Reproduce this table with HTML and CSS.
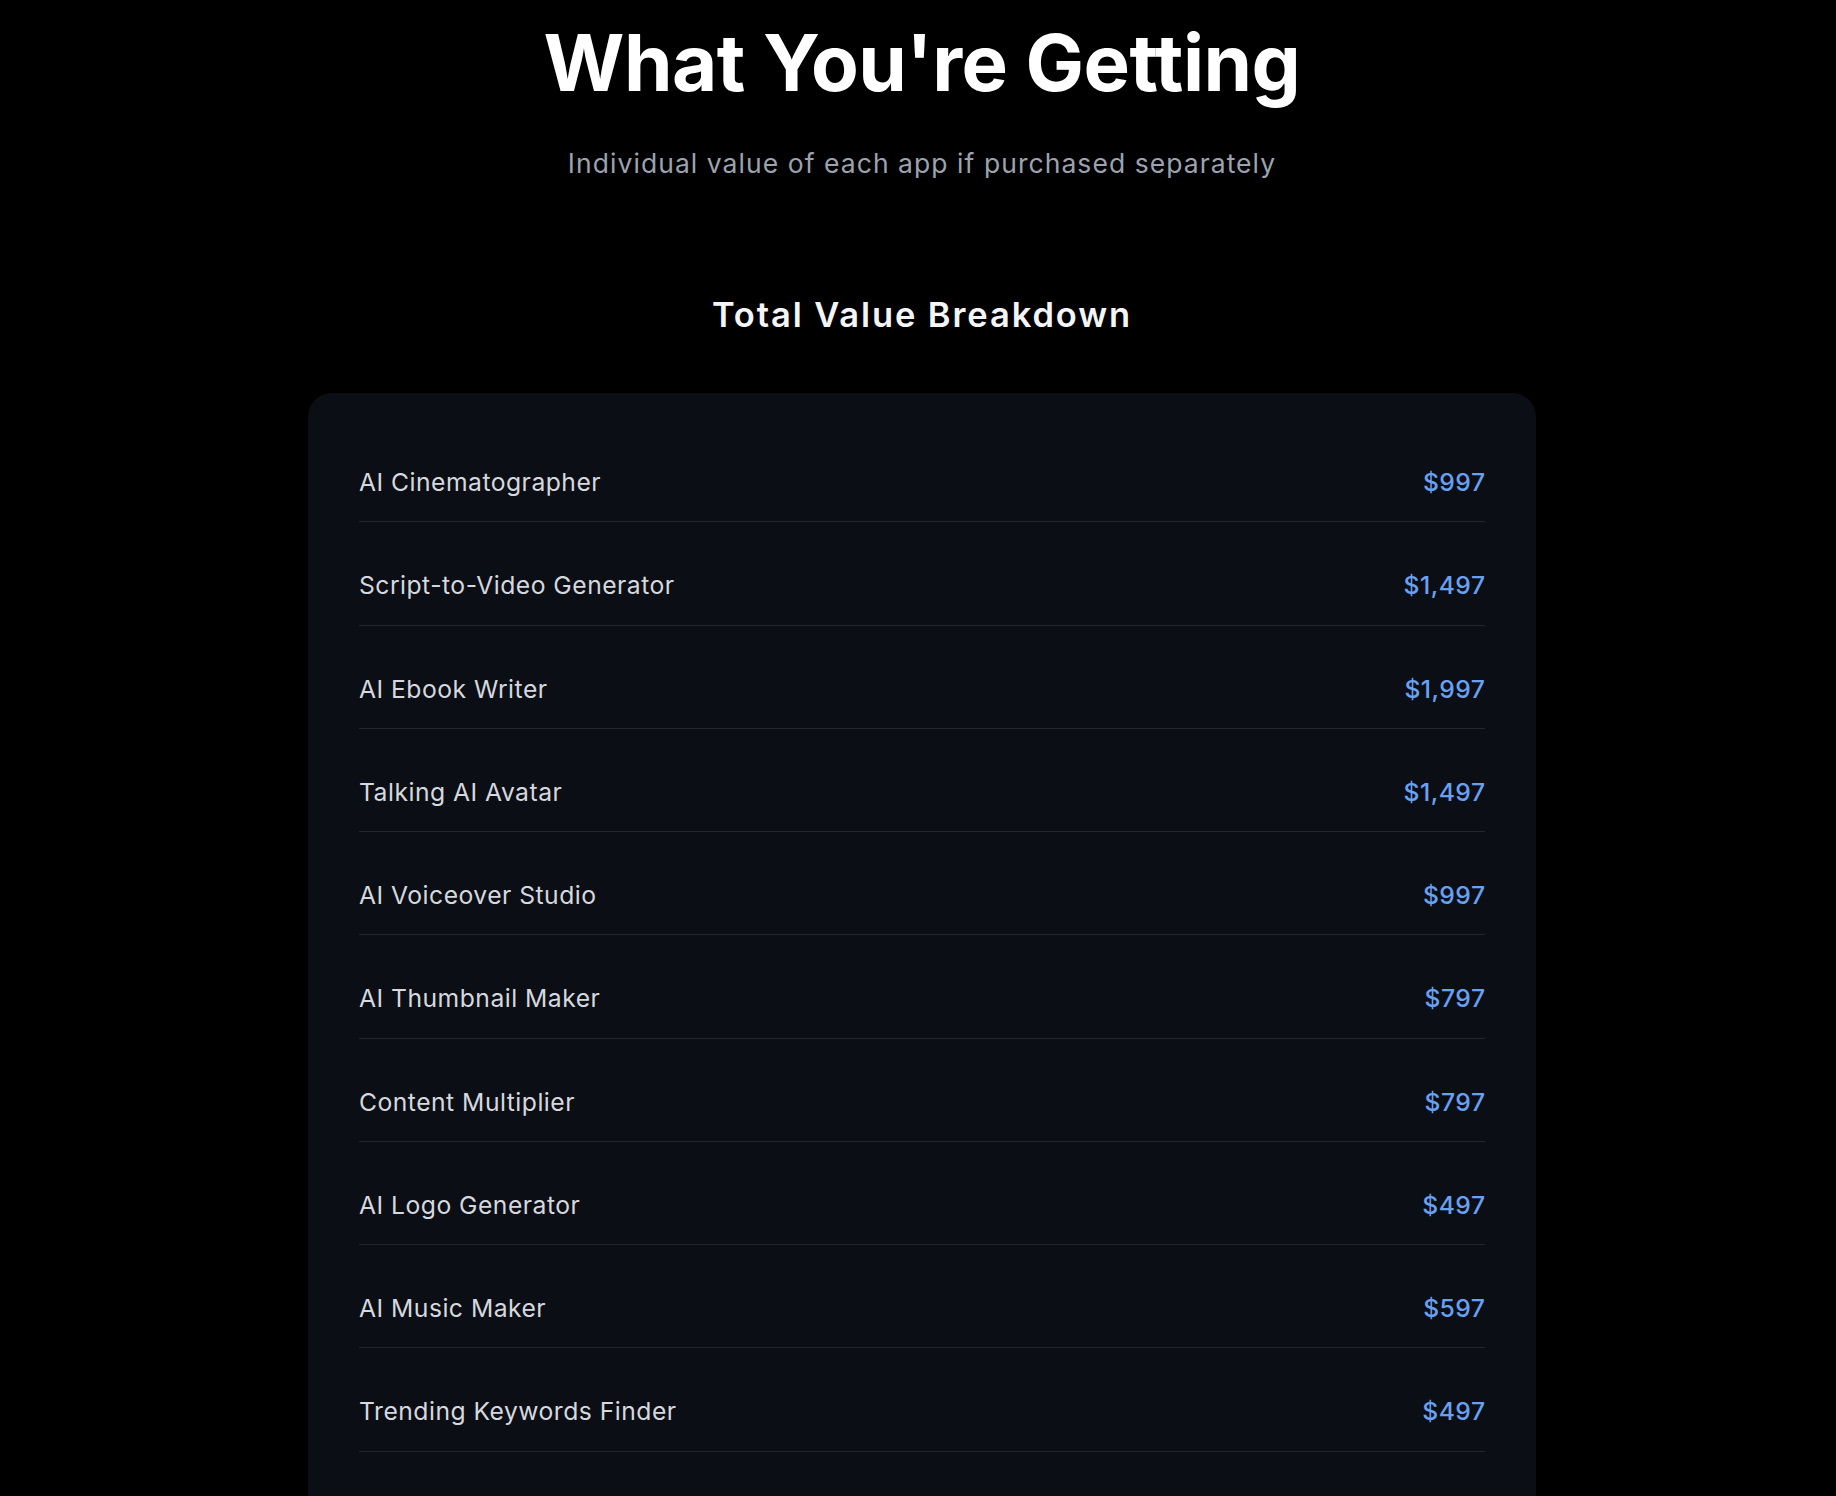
FILE: index.html
```html
<!DOCTYPE html>
<html lang="en">
<head>
  <meta charset="UTF-8">
  <meta name="viewport" content="width=device-width, initial-scale=1">
  <title>What You're Getting</title>
  <link rel="stylesheet" href="styles.css">
</head>
<body>

  <section class="value-section">
    <h1>What You're Getting</h1>
    <p class="subtitle">Individual value of each app if purchased separately</p>

    <h2>Total Value Breakdown</h2>

    <div class="value-card">
      <div class="value-row"><span class="app-name">AI Cinematographer</span><span class="app-price">$997</span></div>
      <div class="value-row"><span class="app-name">Script-to-Video Generator</span><span class="app-price">$1,497</span></div>
      <div class="value-row"><span class="app-name">AI Ebook Writer</span><span class="app-price">$1,997</span></div>
      <div class="value-row"><span class="app-name">Talking AI Avatar</span><span class="app-price">$1,497</span></div>
      <div class="value-row"><span class="app-name">AI Voiceover Studio</span><span class="app-price">$997</span></div>
      <div class="value-row"><span class="app-name">AI Thumbnail Maker</span><span class="app-price">$797</span></div>
      <div class="value-row"><span class="app-name">Content Multiplier</span><span class="app-price">$797</span></div>
      <div class="value-row"><span class="app-name">AI Logo Generator</span><span class="app-price">$497</span></div>
      <div class="value-row"><span class="app-name">AI Music Maker</span><span class="app-price">$597</span></div>
      <div class="value-row"><span class="app-name">Trending Keywords Finder</span><span class="app-price">$497</span></div>
    </div>
  </section>

</body>
</html>
```

FILE: styles.css
```css
body {
  margin: 0;
  background-color: #000;
  font-family: Inter, "Noto Sans", Arial, sans-serif;
  color: #fff;
}

.value-section {
  padding: 19.5px 0 0 8px;
  text-align: center;
}

h1 {
  margin: 0;
  font-size: 78px;
  line-height: 1.1;
  font-weight: 700;
  letter-spacing: -0.5px;
  font-variant-ligatures: none;
  font-feature-settings: "calt" 0, "liga" 0;
  color: #fff;
}

.subtitle {
  margin: 38.5px 0 0;
  font-size: 26.5px;
  line-height: 1.5;
  letter-spacing: 1.05px;
  color: #9ca3af;
}

h2 {
  margin: 109px 0 0;
  font-size: 34.5px;
  line-height: 1.3;
  font-weight: 600;
  letter-spacing: 1.9px;
  color: #f5f5f7;
}

.value-card {
  width: 1228px;
  box-sizing: border-box;
  margin: 56px auto 0;
  padding: 52px 51px 52px 51px;
  background-color: #0b0e15;
  border-radius: 24px;
  text-align: left;
}

.value-row {
  display: flex;
  justify-content: space-between;
  align-items: center;
  padding: 18.7px 0 21.3px;
  border-bottom: 1px solid #23262d;
  margin-bottom: 26.27px;
  font-size: 24.7px;
  line-height: 36px;
  letter-spacing: 0.48px;
}

.app-name {
  color: #d6d8de;
}

.app-price {
  margin-right: -0.48px;
  color: #68a1f1;
  font-weight: 500;
}
```
